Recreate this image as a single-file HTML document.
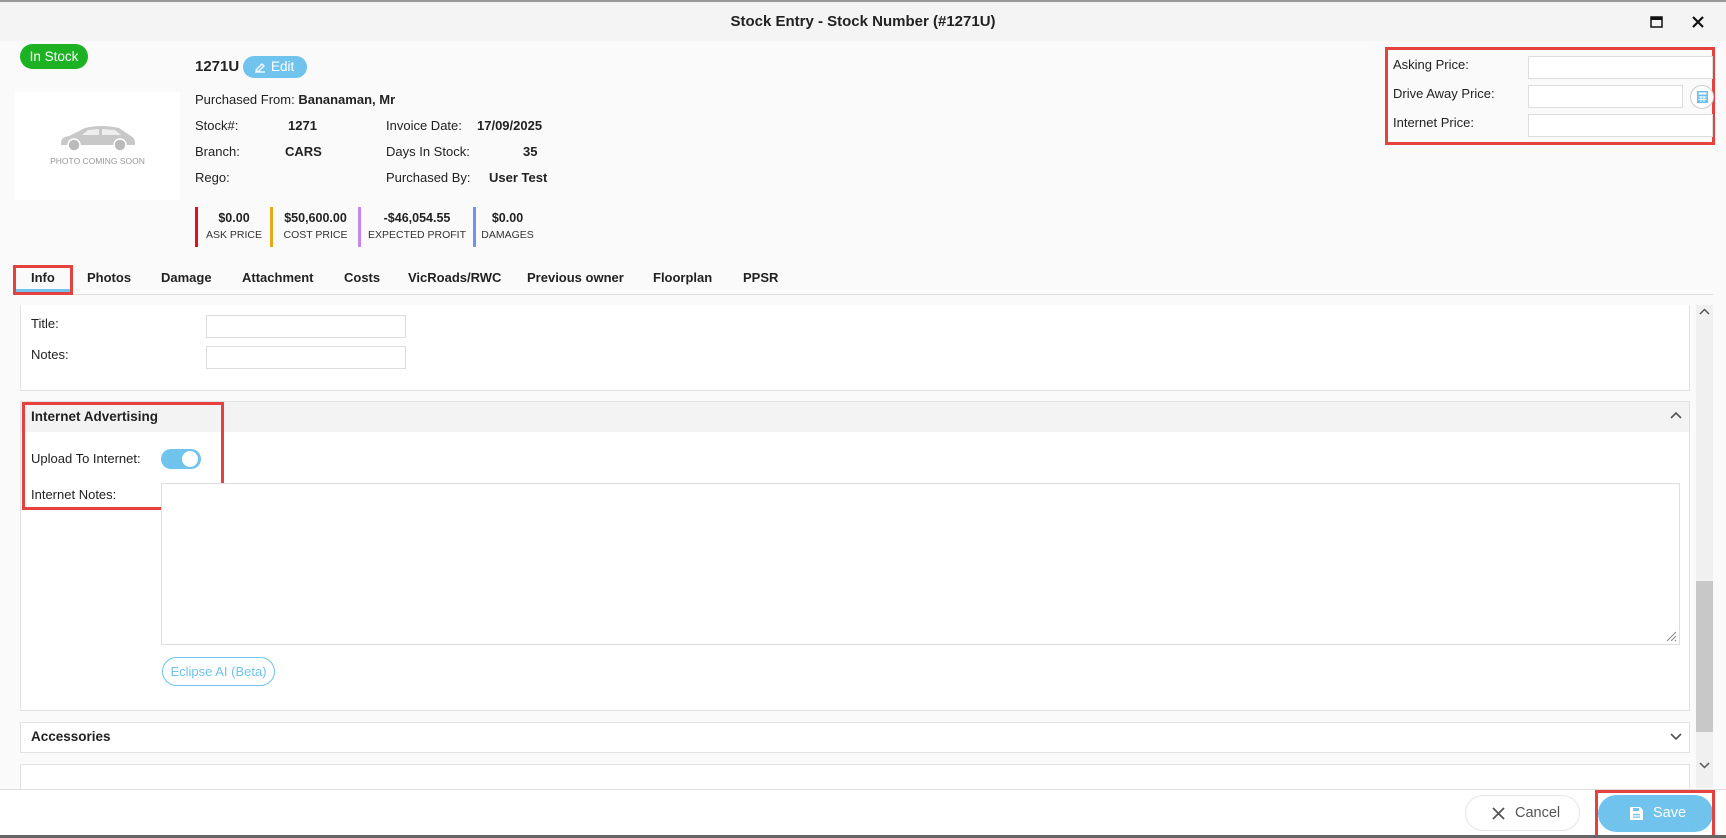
<!DOCTYPE html>
<html><head><style>
*{box-sizing:border-box;margin:0;padding:0}
body{width:1726px;height:838px;overflow:hidden;background:#fafafa;font-family:"Liberation Sans",sans-serif;color:#222;font-size:13px;position:relative}
.a{position:absolute}
.title{left:0;top:0;width:1726px;height:41px;background:#f4f4f4;border-top:2px solid #999;text-align:center;font-weight:bold;font-size:15px;line-height:40px}
.inp{position:absolute;background:#fff;border:1px solid #ddd}
.red{position:absolute;border:3px solid #e5413f}
.b{font-weight:bold}
.stat{position:absolute;top:207px;height:40px;border-left:3px solid;text-align:center}
.stat .v{font-weight:bold;font-size:12.5px;margin-top:4px}
.stat .l{font-size:10.5px;margin-top:4px;color:#333}
.tab{position:absolute;top:270px;font-weight:bold;font-size:13px}
.panel{position:absolute;background:#fff;border:1px solid #e2e2e2}
</style></head><body>
<div class="a title">Stock Entry - Stock Number (#1271U)
<svg class="a" style="left:1650px;top:14px" width="13" height="12"><rect x="1" y="1" width="11" height="10" fill="none" stroke="#111" stroke-width="1.5"/><rect x="1" y="1" width="11" height="3" fill="#111"/></svg>
<svg class="a" style="left:1692px;top:14px" width="12" height="12"><path d="M1 1L11 11M11 1L1 11" stroke="#111" stroke-width="2.2"/></svg>
</div>
<div class="a" style="left:20px;top:44px;width:68px;height:25px;border-radius:13px;background:#1db224;color:#fff;font-size:13.5px;line-height:25px;text-align:center">In Stock</div>
<div class="a" style="left:15px;top:92px;width:165px;height:108px;background:#fff">
<svg class="a" style="left:44px;top:30px" width="78" height="30"><path d="M2 21 Q2 15 10 14 L26 6 Q42 2 60 6 L72 14 Q76 16 76 21 L76 23 L2 23Z" fill="#c8c8c8"/><circle cx="15" cy="23" r="6" fill="#bbb" stroke="#fff" stroke-width="1.5"/><circle cx="61" cy="23" r="6" fill="#bbb" stroke="#fff" stroke-width="1.5"/><path d="M29 8 L40 7 L40 13 L23 13Z M43 7 L56 8 L62 13 L43 13Z" fill="#eee"/></svg>
<div class="a" style="left:0;width:165px;top:64px;text-align:center;font-size:8.5px;color:#999">PHOTO COMING SOON</div></div>
<div class="a b" style="left:195px;top:58px;font-size:15px">1271U</div>
<div class="a" style="left:243px;top:56px;width:64px;height:22px;border-radius:11px;background:#6fc3ed;color:#fff;font-size:13.5px;line-height:22px;padding-left:28px">Edit<svg class="a" style="left:11px;top:5px" width="12" height="12"><path d="M1 11H11M2 9L8 3L10 5L4 11Z" stroke="#fff" fill="none" stroke-width="1.3"/></svg></div>
<div class="a" style="left:195px;top:92px">Purchased From: <b>Bananaman, Mr</b></div>
<div class="a" style="left:195px;top:118px">Stock#:</div><div class="a b" style="left:288px;top:118px">1271</div>
<div class="a" style="left:195px;top:144px">Branch:</div><div class="a b" style="left:285px;top:144px">CARS</div>
<div class="a" style="left:195px;top:170px">Rego:</div>
<div class="a" style="left:386px;top:118px">Invoice Date:</div><div class="a b" style="left:477px;top:118px">17/09/2025</div>
<div class="a" style="left:386px;top:144px">Days In Stock:</div><div class="a b" style="left:523px;top:144px">35</div>
<div class="a" style="left:386px;top:170px">Purchased By:</div><div class="a b" style="left:489px;top:170px">User Test</div>
<div class="stat" style="left:195px;width:75px;border-color:#e3101a"><div class="v">$0.00</div><div class="l">ASK PRICE</div></div>
<div class="stat" style="left:270px;width:88px;border-color:#e6a817"><div class="v">$50,600.00</div><div class="l">COST PRICE</div></div>
<div class="stat" style="left:358px;width:115px;border-color:#c586f4"><div class="v">-$46,054.55</div><div class="l">EXPECTED PROFIT</div></div>
<div class="stat" style="left:473px;width:66px;border-color:#6f94f0"><div class="v">$0.00</div><div class="l">DAMAGES</div></div>
<div class="red" style="left:1385px;top:47px;width:330px;height:98px"></div>
<div class="a" style="left:1393px;top:57px">Asking Price:</div>
<div class="a" style="left:1393px;top:86px">Drive Away Price:</div>
<div class="a" style="left:1393px;top:115px">Internet Price:</div>
<div class="inp" style="left:1528px;top:56px;width:185px;height:23px"></div>
<div class="inp" style="left:1528px;top:85px;width:155px;height:23px"></div>
<div class="inp" style="left:1528px;top:114px;width:185px;height:23px"></div>
<div class="a" style="left:1690px;top:85px;width:24px;height:24px;border-radius:50%;border:1px solid #ccc;background:#fff"><svg class="a" style="left:6px;top:5px" width="11" height="12"><rect x="0" y="0" width="11" height="12" fill="#6fbdf0"/><rect x="1.5" y="1.5" width="8" height="2" fill="#fff"/><path d="M1.5 6H9.5M1.5 8.5H9.5M4 5V11M7 5V11" stroke="#fff"/></svg></div>
<div class="a" style="left:13px;top:294px;width:1700px;height:1px;background:#ddd"></div>
<div class="tab" style="left:31px">Info</div>
<div class="a" style="left:16px;top:289px;width:54px;height:3px;background:#6fc3ed"></div>
<div class="red" style="left:13px;top:265px;width:60px;height:30px"></div>
<div class="tab" style="left:87px">Photos</div><div class="tab" style="left:161px">Damage</div><div class="tab" style="left:242px">Attachment</div><div class="tab" style="left:344px">Costs</div><div class="tab" style="left:408px">VicRoads/RWC</div><div class="tab" style="left:527px">Previous owner</div><div class="tab" style="left:653px">Floorplan</div><div class="tab" style="left:743px">PPSR</div>
<div class="panel" style="left:20px;top:305px;width:1670px;height:86px;border-top:none"></div>
<div class="a" style="left:31px;top:316px">Title:</div><div class="inp" style="left:206px;top:315px;width:200px;height:23px"></div>
<div class="a" style="left:31px;top:347px">Notes:</div><div class="inp" style="left:206px;top:346px;width:200px;height:23px"></div>
<div class="panel" style="left:20px;top:401px;width:1670px;height:310px"></div>
<div class="a" style="left:21px;top:402px;width:1668px;height:30px;background:#f3f3f3"></div>
<div class="a b" style="left:31px;top:409px;font-size:13.5px">Internet Advertising</div>
<svg class="a" style="left:1670px;top:411px" width="12" height="8"><path d="M1 7L6 2L11 7" stroke="#555" fill="none" stroke-width="1.6"/></svg>
<div class="a" style="left:31px;top:451px">Upload To Internet:</div>
<div class="a" style="left:161px;top:449px;width:40px;height:20px;border-radius:10px;background:#6fc3ed"><div class="a" style="left:21px;top:2px;width:16px;height:16px;border-radius:50%;background:#fff"></div></div>
<div class="a" style="left:31px;top:487px">Internet Notes:</div>
<div class="red" style="left:22px;top:402px;width:202px;height:108px"></div>
<div class="inp" style="left:161px;top:483px;width:1519px;height:162px"></div>
<svg class="a" style="left:1665px;top:630px" width="12" height="12"><path d="M11 2L2 11M11 6L6 11M11 10L10 11" stroke="#888"/></svg>
<div class="a" style="left:162px;top:657px;width:113px;height:29px;border-radius:15px;border:1px solid #6fc3ed;background:#fff;color:#6fc3ed;text-align:center;line-height:27px;font-size:13px">Eclipse AI (Beta)</div>
<div class="panel" style="left:20px;top:722px;width:1670px;height:31px"></div>
<div class="a b" style="left:31px;top:729px;font-size:13.5px">Accessories</div>
<svg class="a" style="left:1670px;top:733px" width="12" height="8"><path d="M1 1L6 6L11 1" stroke="#555" fill="none" stroke-width="1.6"/></svg>
<div class="panel" style="left:20px;top:764px;width:1670px;height:30px"></div>
<div class="a" style="left:1696px;top:305px;width:17px;height:483px;background:#f0f0f0"></div>
<div class="a" style="left:1696px;top:581px;width:17px;height:151px;background:#c8c8c8"></div>
<svg class="a" style="left:1699px;top:308px" width="11" height="7"><path d="M1 6L5.5 1.5L10 6" stroke="#555" fill="none" stroke-width="1.5"/></svg>
<svg class="a" style="left:1699px;top:762px" width="11" height="7"><path d="M1 1L5.5 5.5L10 1" stroke="#555" fill="none" stroke-width="1.5"/></svg>
<div class="a" style="left:0;top:789px;width:1726px;height:49px;background:#fff;border-top:1px solid #ddd"></div>
<div class="a" style="left:1465px;top:795px;width:115px;height:36px;border-radius:18px;border:1px solid #e5e5e5;background:#fff;color:#555;font-size:14.5px;line-height:34px;padding-left:49px">Cancel<svg class="a" style="left:26px;top:11px" width="13" height="13"><path d="M1 1L12 12M12 1L1 12" stroke="#555" stroke-width="1.8"/></svg></div>
<div class="a" style="left:1598px;top:795px;width:115px;height:37px;border-radius:19px;background:#6fc3ed;color:#fff;font-size:14.5px;line-height:37px;padding-left:55px">Save<svg class="a" style="left:32px;top:12px" width="13" height="13"><path d="M0 0H10L13 3V13H0Z" fill="#fff"/><rect x="3" y="1" width="6" height="3" fill="#6fc3ed"/><rect x="3" y="7" width="7" height="1.3" fill="#6fc3ed"/><rect x="3" y="9.5" width="7" height="1.3" fill="#6fc3ed"/></svg></div>
<div class="red" style="left:1595px;top:790px;width:120px;height:48px"></div>
<div class="a" style="left:0;top:835px;width:1726px;height:3px;background:#666"></div>
</body></html>
